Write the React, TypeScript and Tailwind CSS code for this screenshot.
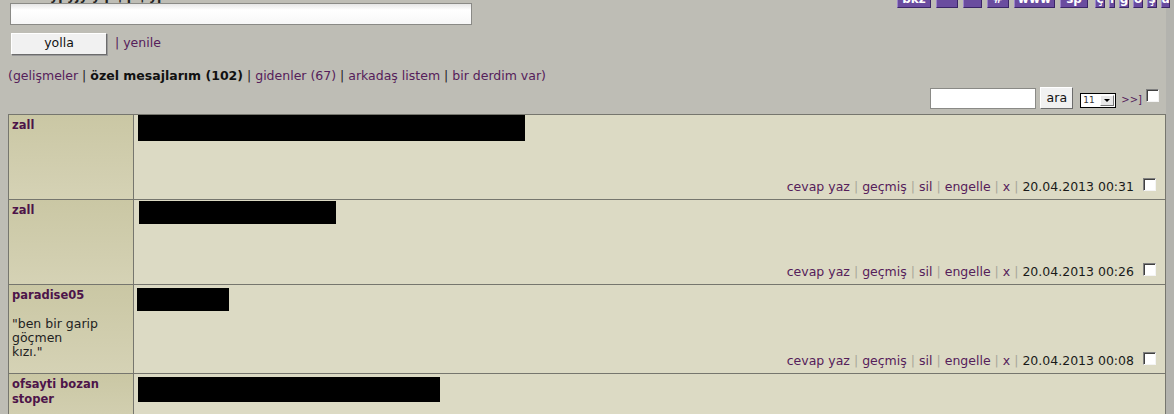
import React from "react";

const font = { fontFamily: '"DejaVu Sans", Verdana, sans-serif' };

function Checkbox() {
  return (
    <span className="inline-block w-[13px] h-[13px] bg-white border border-t-[#808080] border-l-[#808080] border-b-[#f4f4f4] border-r-[#f4f4f4] shadow-[inset_1px_1px_0_#404040]" />
  );
}

function PurpleBtn({ label, w }: { label: string; w: string }) {
  return (
    <span
      className={`inline-flex items-end justify-center h-[18px] ${w} bg-[#6a4c9f] text-white text-[12px] font-bold leading-[16px] border border-t-[#9c85c9] border-l-[#9c85c9] border-b-[#3a2466] border-r-[#3a2466]`}
    >
      {label}
    </span>
  );
}

function Footer({ time }: { time: string }) {
  const sep = <span className="text-[#a8a69a] mx-[4px]">|</span>;
  return (
    <div className="flex items-center justify-end pr-[9px] text-[12.5px] leading-[15px]">
      <span className="text-[#55205a]">cevap yaz</span>
      {sep}
      <span className="text-[#55205a]">geçmiş</span>
      {sep}
      <span className="text-[#55205a]">sil</span>
      {sep}
      <span className="text-[#55205a]">engelle</span>
      {sep}
      <span className="text-[#55205a]">x</span>
      {sep}
      <span className="text-[#1a1a1a]">{time}</span>
      <span className="ml-[9px] -mt-[4px] flex">
        <Checkbox />
      </span>
    </div>
  );
}

function Row({
  name,
  extra,
  barW,
  barH,
  barMl,
  barMt,
  time,
  h,
  footerPb,
}: {
  name: React.ReactNode;
  extra?: React.ReactNode;
  barW: string;
  barH: string;
  barMl: string;
  barMt: string;
  time?: string;
  h: string;
  footerPb: string;
}) {
  return (
    <div className={`flex shrink-0 ${h} border-b border-[#76766e]`}>
      <div className="w-[125px] shrink-0 border-r border-[#76766e] bg-gradient-to-b from-[#cac7a4] to-[#d5d2b5] pl-[3px] pt-[3px]">
        <div className="text-[11.5px] font-bold text-[#4d1449] leading-[15px]">{name}</div>
        {extra}
      </div>
      <div className={`flex-1 flex flex-col bg-[#dcdac4] ${footerPb}`}>
        <div className={`${barW} ${barH} ${barMl} ${barMt} bg-black shrink-0`} />
        <div className="flex-1" />
        {time && <Footer time={time} />}
      </div>
    </div>
  );
}

export default function App() {
  return (
    <div className="w-[1174px] h-[414px] overflow-hidden flex bg-[#bebdb5]" style={font}>
      <div className="flex-1 flex flex-col relative [&>*]:shrink-0">
        {/* clipped line at top */}
        <div className="h-[3px] overflow-hidden relative">
          <div className="absolute left-[50px] bottom-0 text-[12.5px] font-bold text-[#222] leading-[15px] whitespace-nowrap">
            ypyjy y p | p | yp
          </div>
        </div>
        {/* top-right purple buttons */}
        <div className="absolute top-[-10px] left-[897px] flex items-start gap-[5px]">
          <PurpleBtn label="bkz" w="w-[34px]" />
          <PurpleBtn label="" w="w-[22px]" />
          <PurpleBtn label="" w="w-[19px]" />
          <PurpleBtn label="#" w="w-[22px]" />
          <PurpleBtn label="www" w="w-[41px]" />
          <PurpleBtn label="sp" w="w-[28px]" />
          <span className="flex gap-[4px] ml-[2px]">
            <PurpleBtn label="ç" w="w-[10px]" />
            <PurpleBtn label="ı" w="w-[6px]" />
            <PurpleBtn label="ğ" w="w-[10px]" />
            <PurpleBtn label="ö" w="w-[10px]" />
            <PurpleBtn label="ş" w="w-[10px]" />
            <PurpleBtn label="ü" w="w-[9px]" />
          </span>
        </div>
        {/* message input */}
        <div className="ml-[10px] w-[462px] h-[22px] border border-[#8a8a86] bg-gradient-to-b from-[#e6e6e6] via-white to-[#f7f7f7] via-[30%]" />
        <div className="flex items-center mt-[7px] ml-[11px] h-[23px]">
          <span className="w-[96px] h-[22px] flex items-center justify-center bg-[#f1f1f1] text-[12.5px] text-[#111] border border-t-white border-l-white border-b-[#6c6c6c] border-r-[#6c6c6c] shadow-[1px_1px_0_#999]">
            yolla
          </span>
          <span className="ml-[8px] text-[12.5px] text-[#55205a]">| yenile</span>
        </div>
        {/* nav */}
        <div className="mt-[13px] ml-[8px] text-[12.5px] leading-[16px] text-[#55205a] whitespace-nowrap">
          (gelişmeler <span className="text-[#222]">|</span>{" "}
          <span className="font-bold text-[#111]">özel mesajlarım (102)</span> <span className="text-[#222]">|</span> gidenler (67){" "}
          <span className="text-[#222]">|</span> arkadaş listem <span className="text-[#222]">|</span> bir derdim var)
        </div>
        {/* search */}
        <div className="flex items-center justify-end mt-[3px] h-[22px] pr-[7px]">
          <span className="w-[106px] h-[21px] bg-white border border-[#8a8a86]" />
          <span className="ml-[4px] w-[33px] h-[22px] flex items-center justify-center bg-[#f1f1f1] text-[12.5px] text-[#111] border border-t-white border-l-white border-b-[#6c6c6c] border-r-[#6c6c6c]">
            ara
          </span>
          <span className="ml-[7px] mt-[4px] w-[36px] h-[15px] flex items-center border border-black bg-white">
            <span className="ml-[2px] text-[9px] text-[#333] leading-none w-[17px]">11</span>
            <span className="w-[14px] h-[11px] bg-[#e8e8e8] border border-t-white border-l-white border-b-[#777] border-r-[#777] flex items-center justify-center">
              <span className="w-0 h-0 border-l-[3px] border-r-[3px] border-t-[3px] border-l-transparent border-r-transparent border-t-black" />
            </span>
          </span>
          <span className="ml-[5px] mt-[2px] text-[10px] text-[#55205a]">&gt;&gt;]</span>
          <span className="ml-[4px] -mt-[5px] flex">
            <Checkbox />
          </span>
        </div>
        {/* table */}
        <div className="mt-[5px] ml-[8px] border-l border-t border-r border-[#76766e] flex flex-col">
          <Row name="zall" barW="w-[387px]" barH="h-[26px]" barMl="ml-[4px]" barMt="mt-0" time="20.04.2013 00:31" h="h-[85px]" footerPb="pb-[5px]" />
          <Row name="zall" barW="w-[197px]" barH="h-[23px]" barMl="ml-[5px]" barMt="mt-[1px]" time="20.04.2013 00:26" h="h-[85px]" footerPb="pb-[5px]" />
          <Row
            name="paradise05"
            extra={
              <div className="mt-[14px] text-[12.5px] leading-[14px] text-[#222]">
                "ben bir garip
                <br />
                göçmen
                <br />
                kızı."
              </div>
            }
            barW="w-[92px]"
            barH="h-[23px]"
            barMl="ml-[3px]"
            barMt="mt-[3px]"
            time="20.04.2013 00:08"
            h="h-[89px]"
            footerPb="pb-[5px]"
          />
          <Row name={<>ofsayti bozan<br />stoper</>} barW="w-[302px]" barH="h-[25px]" barMl="ml-[4px]" barMt="mt-[3px]" h="h-[60px]" footerPb="pb-0" />
        </div>
      </div>
      <div className="w-[8px] shrink-0 bg-[#b3b3ae]" />
    </div>
  );
}
